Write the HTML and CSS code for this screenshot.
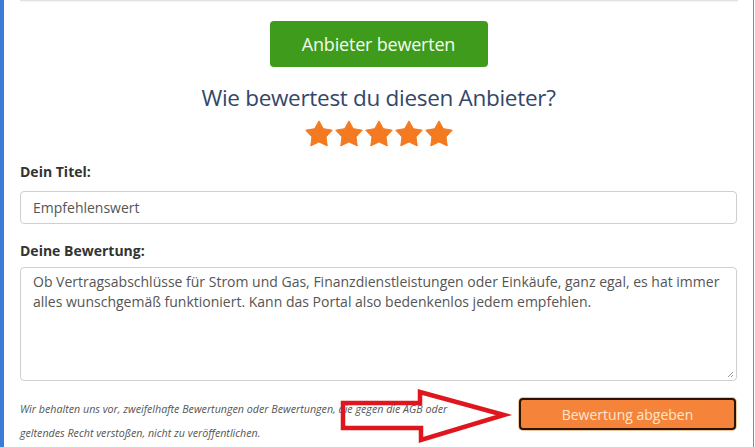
FILE: index.html
```html
<!DOCTYPE html>
<html lang="de">
<head>
<meta charset="utf-8">
<title>Anbieter bewerten</title>
<link rel="stylesheet" href="styles.css">
</head>
<body>
<div class="frame">
  <div class="prev-card"></div>
  <div class="content">
    <div class="cta-row">
      <button class="btn-green" type="button">Anbieter bewerten</button>
    </div>
    <h2 class="question">Wie bewertest du diesen Anbieter?</h2>
    <div class="stars">
      <svg class="star" viewBox="0 0 24 24"><path d="M12 1.5L15.47 7.73L22.6 8.95L17.61 14.32L18.6 21.5L12 18.4L5.4 21.5L6.39 14.32L1.4 8.95L8.53 7.73Z"/></svg>
      <svg class="star" viewBox="0 0 24 24"><path d="M12 1.5L15.47 7.73L22.6 8.95L17.61 14.32L18.6 21.5L12 18.4L5.4 21.5L6.39 14.32L1.4 8.95L8.53 7.73Z"/></svg>
      <svg class="star" viewBox="0 0 24 24"><path d="M12 1.5L15.47 7.73L22.6 8.95L17.61 14.32L18.6 21.5L12 18.4L5.4 21.5L6.39 14.32L1.4 8.95L8.53 7.73Z"/></svg>
      <svg class="star" viewBox="0 0 24 24"><path d="M12 1.5L15.47 7.73L22.6 8.95L17.61 14.32L18.6 21.5L12 18.4L5.4 21.5L6.39 14.32L1.4 8.95L8.53 7.73Z"/></svg>
      <svg class="star" viewBox="0 0 24 24"><path d="M12 1.5L15.47 7.73L22.6 8.95L17.61 14.32L18.6 21.5L12 18.4L5.4 21.5L6.39 14.32L1.4 8.95L8.53 7.73Z"/></svg>
    </div>
    <label class="label label-title">Dein Titel:</label>
    <div class="input">Empfehlenswert</div>
    <label class="label label-review">Deine Bewertung:</label>
    <div class="textarea">Ob Vertragsabschlüsse für Strom und Gas, Finanzdienstleistungen oder Einkäufe, ganz egal, es hat immer alles wunschgemäß funktioniert. Kann das Portal also bedenkenlos jedem empfehlen.<svg class="grip" viewBox="0 0 8 8"><path d="M7 2L2 7M7 5L5 7" stroke="#888" stroke-width="0.9"/></svg></div>
    <div class="footer">
      <p class="disclaimer">Wir behalten uns vor, zweifelhafte Bewertungen oder Bewertungen, die gegen die AGB oder geltendes Recht verstoßen, nicht zu veröffentlichen.</p>
      <button class="btn-orange" type="button">Bewertung abgeben</button>
    </div>
  </div>
  <svg class="arrow" viewBox="0 0 755 447" width="755" height="447">
    <path d="M343 403 L420 403 L420 392 L504 415 L421 440 L421 428 L343 428 Z" fill="none" stroke="#e0161e" stroke-width="4.5" stroke-linejoin="miter"/>
  </svg>
</div>
</body>
</html>
```

FILE: styles.css
```css
html, body {
  margin: 0;
  padding: 0;
  background: #fff;
}

body {
  font-family: "Open Sans", "Liberation Sans", sans-serif;
  color: #333;
}

.frame {
  position: relative;
  height: 447px;
  margin-right: 1px;
  border-left: 4px solid #3d7bd8;
  border-right: 1px solid #5c8fd6;
  box-sizing: border-box;
  overflow: hidden;
}

.prev-card {
  margin: 0 15px 0 16px;
  height: 1px;
  background: #e2e2e2;
  box-shadow: 0 1px 2px rgba(0, 0, 0, 0.07);
}

.content {
  padding: 0 16px;
}

.cta-row {
  display: flex;
  justify-content: center;
  padding-top: 20px;
}

.btn-green {
  width: 218px;
  height: 46px;
  border: none;
  border-radius: 4px;
  background: #3f9b1c;
  color: #f2fdec;
  font-family: "Open Sans", sans-serif;
  font-size: 18px;
  letter-spacing: -0.2px;
  padding: 0;
}

.question {
  margin: 14px 0 0;
  text-align: center;
  font-weight: 400;
  font-size: 22.5px;
  line-height: 34px;
  color: #33476b;
  letter-spacing: -0.3px;
}

.stars {
  display: flex;
  justify-content: center;
  margin-top: 4px;
}

.star {
  width: 30px;
  height: 30px;
  fill: #f37a21;
  stroke: #f37a21;
  stroke-width: 0.8;
  stroke-linejoin: round;
}

.label {
  display: block;
  font-size: 14px;
  font-weight: 700;
  line-height: 20px;
  color: #333;
}

.label-title {
  margin-top: 13px;
}

.label-review {
  margin-top: 17px;
}

.input {
  margin-top: 9px;
  height: 33px;
  box-sizing: border-box;
  border: 1px solid #cfcfcf;
  border-radius: 4px;
  padding: 0 12px;
  font-size: 14px;
  line-height: 31px;
  color: #555;
}

.textarea {
  position: relative;
  margin-top: 6px;
  height: 114px;
  box-sizing: border-box;
  border: 1px solid #cfcfcf;
  border-radius: 4px;
  padding: 4px 12px;
  font-size: 14px;
  line-height: 20px;
  color: #555;
}

.grip {
  position: absolute;
  right: 2px;
  bottom: 2px;
  width: 8px;
  height: 8px;
}

.footer {
  display: flex;
  justify-content: space-between;
  align-items: flex-start;
  margin-top: 16px;
}

.disclaimer {
  margin: 0;
  width: 440px;
  font-size: 10.7px;
  font-style: italic;
  line-height: 24px;
  color: #555;
}

.btn-orange {
  margin: 1px 1px 0 0;
  width: 217px;
  height: 32px;
  box-sizing: border-box;
  border: 2px solid #2b1405;
  border-radius: 4px;
  box-shadow: 0 0 0 1px #f1c59c;
  background: #f5843a;
  color: #fde6cf;
  font-family: "Open Sans", sans-serif;
  font-size: 14px;
  padding: 0;
}

.arrow {
  position: absolute;
  left: -4px;
  top: 0;
  pointer-events: none;
}
```
